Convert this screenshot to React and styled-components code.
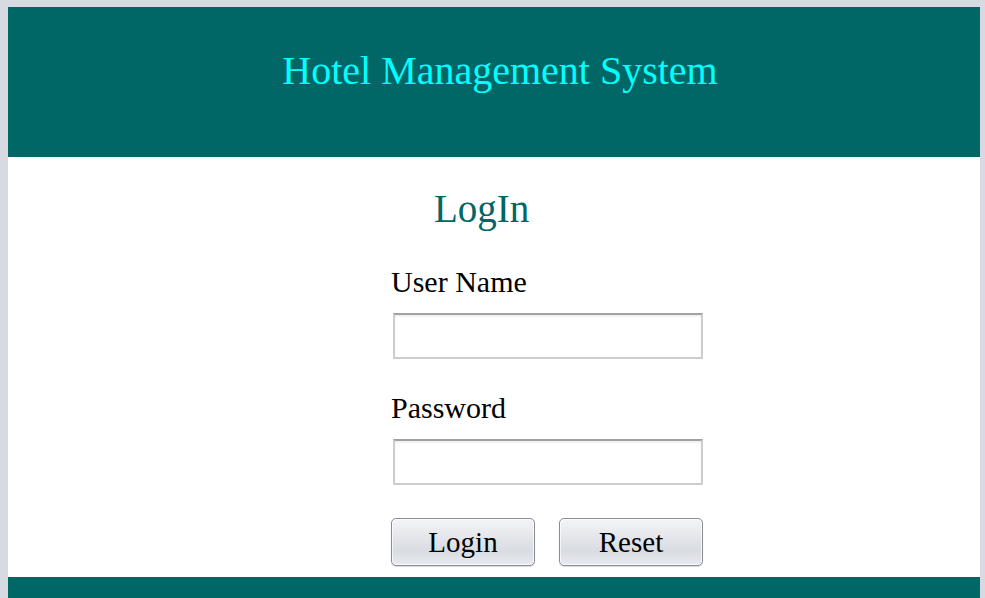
import React, { useState } from 'react';
import styled, { createGlobalStyle } from 'styled-components';

const GlobalStyle = createGlobalStyle`
  html, body {
    background: #d7dae1;
  }
  body {
    margin: 7px 0 0 8px;
    font-family: "Liberation Serif", "Times New Roman", serif;
  }
`;

const Page = styled.div`
  width: 972px;
  background: #ffffff;
`;

const Header = styled.header`
  height: 150px;
  box-sizing: border-box;
  padding: 41px 0 0 12px;
  background: #006666;
  text-align: center;
`;

const SiteTitle = styled.h1`
  margin: 0;
  font-size: 40px;
  line-height: 46px;
  font-weight: normal;
  color: #00ffff;
`;

const Main = styled.main`
  height: 420px;
  box-sizing: border-box;
  padding: 30px 0 0 383px;
`;

const LoginForm = styled.form`
  display: flex;
  flex-direction: column;
  align-items: flex-start;
  width: 314px;
`;

const FormTitle = styled.h2`
  margin: 0 0 34px 43px;
  font-size: 39px;
  line-height: 44px;
  font-weight: normal;
  color: #006666;
`;

const FieldLabel = styled.label`
  display: block;
  font-size: 30px;
  line-height: 34px;
  color: #000000;
`;

const TextInput = styled.input`
  box-sizing: border-box;
  width: 310px;
  height: 46px;
  margin: 14px 0 32px 2px;
  padding: 4px 6px;
  border: 2px solid #cdcdcd;
  border-top-color: #a2a2a2;
  box-shadow: inset 0 2px 2px rgba(0, 0, 0, 0.06);
  font-family: inherit;
  font-size: 22px;
  outline: none;
  &:last-of-type {
    margin-bottom: 33px;
  }
`;

const ButtonRow = styled.div`
  display: flex;
  gap: 24px;
`;

const Button = styled.button`
  box-sizing: border-box;
  width: 144px;
  height: 48px;
  padding: 0;
  border: 1px solid #8a8c92;
  border-radius: 5px;
  background: linear-gradient(#f4f5f8 0%, #e2e4e9 45%, #d9dce3 70%, #e8eaee 100%);
  box-shadow: inset 0 0 0 1px rgba(255, 255, 255, 0.7), 0 1px 1px rgba(0, 0, 0, 0.15);
  font-family: inherit;
  font-size: 29px;
  color: #000000;
  cursor: pointer;
`;

const Footer = styled.footer`
  height: 40px;
  background: #006666;
`;

const App = () => {
  const [userName, setUserName] = useState('');
  const [password, setPassword] = useState('');

  const handleInput = func => event => func(event.target.value);
  const handleReset = () => {
    setUserName('');
    setPassword('');
  };

  return (
    <>
      <GlobalStyle />
      <Page>
        <Header>
          <SiteTitle>Hotel Management System</SiteTitle>
        </Header>
        <Main>
          <LoginForm onSubmit={e => e.preventDefault()}>
            <FormTitle>LogIn</FormTitle>
            <FieldLabel htmlFor="username">User Name</FieldLabel>
            <TextInput
              id="username"
              type="text"
              value={userName}
              onChange={handleInput(setUserName)}
            />
            <FieldLabel htmlFor="password">Password</FieldLabel>
            <TextInput
              id="password"
              type="password"
              value={password}
              onChange={handleInput(setPassword)}
            />
            <ButtonRow>
              <Button type="submit">Login</Button>
              <Button type="button" onClick={handleReset}>
                Reset
              </Button>
            </ButtonRow>
          </LoginForm>
        </Main>
        <Footer />
      </Page>
    </>
  );
};

export default App;
